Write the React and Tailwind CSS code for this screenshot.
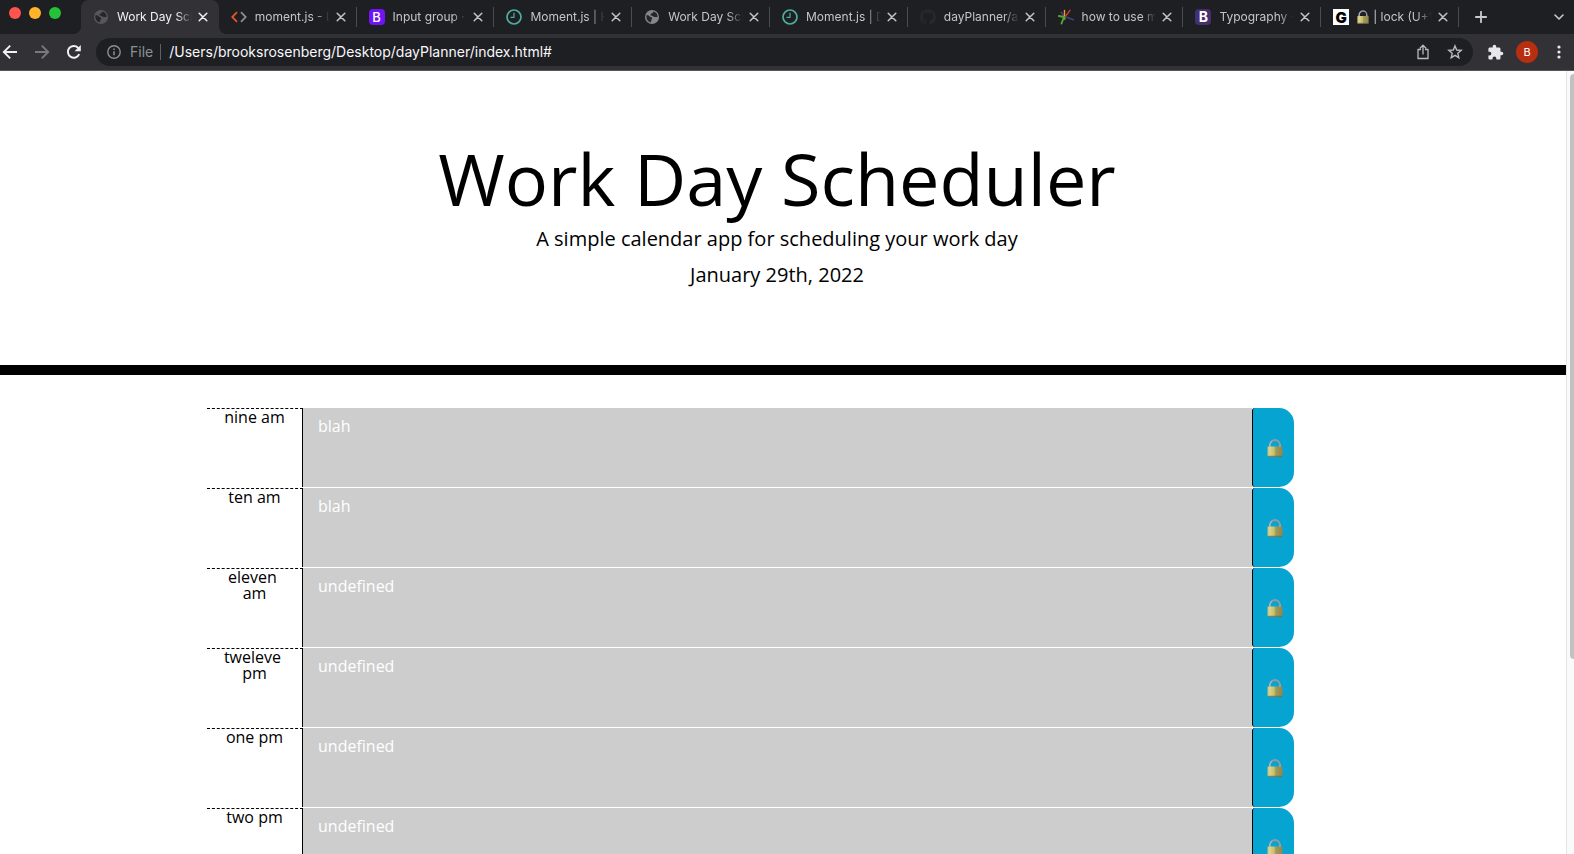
import React from 'react';

const svg = { fill: 'none', strokeLinecap: 'round', strokeLinejoin: 'round' };

function Globe({ color }) {
  return (
    <svg viewBox="0 0 16 16" className="size-4 shrink-0" aria-hidden="true">
      <circle cx="8" cy="8" r="7" fill={color} />
      <path
        d="M2.600 6c1.600.1 2.500.8 3.400 1.800.6.7 1.900.4 2.200 1.300.3.800-.8 1.200-.8 2 0 .900-.5 1.300-.5 2.300A5.600 5.600 0 0 1 2.600 6zM9.200 2.500c.2 1-.5 1.600-1.400 1.700-.8.1-.6 1-1.300 1.300-.4.300.1 1 .8 1 1.100 0 1.500.9 2.600 1.300.8.300 1.900.2 3.700.2A5.600 5.600 0 0 0 9.200 2.500z"
        fill="#25262a"
      />
    </svg>
  );
}

function Brackets() {
  return (
    <svg viewBox="0 0 16 16" className="size-4 shrink-0" fill="none" strokeWidth="1.800" aria-hidden="true">
      <path d="M6 3.200 1.300 8 6 12.800" stroke="#e5532d" />
      <path d="M10 3.200 14.700 8 10 12.800" stroke="#8c8c8c" />
    </svg>
  );
}

function LetterB({ deep }) {
  return (
    <span
      aria-hidden="true"
      className={
        deep
          ? 'flex size-4 shrink-0 items-center justify-center rounded-sm bg-[#472f6f] text-[14px] leading-none font-bold text-white'
          : 'flex size-4 shrink-0 items-center justify-center rounded-sm bg-[#7014f5] text-[13px] leading-none font-medium text-white'
      }
    >
      B
    </span>
  );
}

function Clock() {
  return (
    <svg viewBox="0 0 16 16" className="size-4 shrink-0" stroke="#4fada0" {...svg} aria-hidden="true">
      <circle cx="8" cy="8" r="7" strokeWidth="1.700" />
      <path d="M8 4v4.400H5" strokeWidth="1.200" />
    </svg>
  );
}

function Octocat() {
  return (
    <svg viewBox="0 0 16 16" className="size-4 shrink-0" fill="#26282c" aria-hidden="true">
      <path d="M8 0C3.58 0 0 3.58 0 8c0 3.54 2.29 6.53 5.47 7.59.4.07.55-.17.55-.38 0-.19-.01-.82-.01-1.49-2.01.37-2.53-.49-2.69-.94-.09-.23-.48-.94-.82-1.13-.28-.15-.68-.52-.01-.53.63-.01 1.08.58 1.23.82.72 1.21 1.87.87 2.33.66.07-.52.28-.87.51-1.07-1.78-.2-3.64-.89-3.64-3.95 0-.87.31-1.59.82-2.15-.08-.2-.36-1.02.08-2.12 0 0 .67-.21 2.2.82a7.6 7.6 0 0 1 4 0c1.53-1.04 2.2-.82 2.2-.82.44 1.1.16 1.92.08 2.12.51.56.82 1.27.82 2.15 0 3.07-1.87 3.75-3.65 3.95.29.25.54.73.54 1.48 0 1.07-.01 1.93-.01 2.2 0 .21.15.46.55.38A8.01 8.01 0 0 0 16 8c0-4.42-3.58-8-8-8z" />
    </svg>
  );
}

function Burst() {
  return (
    <svg viewBox="0 0 16 16" className="size-4 shrink-0" strokeWidth="1.400" {...svg} aria-hidden="true">
      <path d="M6.500 8 3.200 3.200" stroke="#4b3f86" />
      <path d="M6.500 8 6.500 1.500" stroke="#e0a02c" />
      <path d="M7 8 12 1.300" stroke="#d63a31" />
      <path d="M8 8l7.300 2.800" stroke="#473b80" strokeWidth="1.600" />
      <path d="M6 8 .8 7M6 8l-2.500 6.500M6 8l.8 2" stroke="#55a630" strokeWidth="1.900" />
    </svg>
  );
}

function LetterG() {
  return (
    <span aria-hidden="true" className="flex size-4 shrink-0 items-center justify-center bg-white text-[15px] leading-none font-black text-black">
      G
    </span>
  );
}

function Padlock({ small }) {
  return (
    <svg viewBox="0 0 16 18" className={small ? 'h-3.5 w-3 shrink-0' : 'h-[18px] w-4 shrink-0'} aria-hidden="true">
      <defs>
        <linearGradient id="brass" x1="0" x2="1" y1="0" y2="0">
          <stop offset="0" stopColor="#c9c072" />
          <stop offset=".15" stopColor="#dcd48b" />
          <stop offset=".45" stopColor="#c6bd6f" />
          <stop offset=".55" stopColor="#a39a58" />
          <stop offset="1" stopColor="#8f8650" />
        </linearGradient>
      </defs>
      <path d="M2.900 8.500V6.300a5.100 5.300 0 0 1 10.200 0v2.200" fill="none" stroke="#8f9aac" strokeWidth="1.800" />
      <path d="M2.700 8V6.300A5.300 5.500 0 0 1 5 1.800M12.900 8V6.300" fill="none" stroke="#c3cad6" strokeWidth=".8" />
      <rect x=".5" y="7.600" width="15" height="10.200" rx=".8" fill="url(#brass)" />
      <path d="M.8 17.300h14.400" stroke="#736c3c" strokeWidth=".9" />
    </svg>
  );
}

function Close() {
  return (
    <svg viewBox="0 0 10 10" className="size-2.5" stroke="currentColor" strokeWidth="1.500" {...svg} aria-hidden="true">
      <path d="m1.200 1.200 7.600 7.600M8.800 1.200 1.200 8.800" />
    </svg>
  );
}

const tabs = [
  { icon: <Globe color="#55575b" />, title: 'Work Day Scheduler', active: true },
  { icon: <Brackets />, title: 'moment.js - Libraries' },
  { icon: <LetterB />, title: 'Input group · Bootstrap' },
  { icon: <Clock />, title: 'Moment.js | Home' },
  { icon: <Globe color="#83878c" />, title: 'Work Day Scheduler' },
  { icon: <Clock />, title: 'Moment.js | Docs' },
  { icon: <Octocat />, title: 'dayPlanner/assets' },
  { icon: <Burst />, title: 'how to use moment' },
  { icon: <LetterB deep />, title: 'Typography · Bootstrap' },
  { icon: <LetterG />, title: '| lock (U+1F512)', lock: true },
];

function Tab({ icon, title, active, lock }) {
  return (
    <li
      className={
        active
          ? 'relative flex h-full min-w-0 items-center rounded-t-lg bg-[#323136] pr-[11px] pl-3 text-[#f1f1f3]'
          : 'flex h-full min-w-0 items-center text-[#c3c5ca]'
      }
    >
      {active && (
        <>
          <span className="absolute bottom-0 -left-2 size-2 bg-[radial-gradient(circle_at_0_0,transparent_8px,#323136_8px)]" />
          <span className="absolute -right-2 bottom-0 size-2 bg-[radial-gradient(circle_at_100%_0,transparent_8px,#323136_8px)]" />
        </>
      )}
      <div className={active ? 'flex min-w-0 flex-1 items-center' : 'flex h-5 min-w-0 flex-1 items-center border-r border-[#4b4c50] pr-2.5 pl-3'}>
        {icon}
        <a
          href="#"
          className="ml-2 flex min-w-0 flex-1 items-center gap-1 overflow-hidden text-xs whitespace-nowrap [mask-image:linear-gradient(to_right,black_80%,transparent)]"
        >
          {lock && <Padlock small />}
          {title}
        </a>
        <button type="button" aria-label={'Close ' + title} className="ml-1.5 shrink-0">
          <Close />
        </button>
      </div>
    </li>
  );
}

function Browser() {
  return (
    <header className="border-b border-[#57545c] bg-[#323136] font-[Inter,sans-serif]">
      <div className="flex h-[34px] items-center bg-[#1e1f23]">
        <div className="flex w-[81px] shrink-0 gap-2 pb-2 pl-[9px]">
          <button type="button" aria-label="Close window" className="size-3 rounded-full bg-[#ff544d]" />
          <button type="button" aria-label="Minimize window" className="size-3 rounded-full bg-[#ffb429]" />
          <button type="button" aria-label="Zoom window" className="size-3 rounded-full bg-[#25c138]" />
        </div>
        <ul className="grid h-full max-w-[1378px] min-w-0 flex-1 grid-cols-10 items-center">
          {tabs.map((t, i) => (
            <Tab key={i} {...t} />
          ))}
        </ul>
        <button type="button" aria-label="New tab" className="ml-4 shrink-0 text-[#c9cace]">
          <svg viewBox="0 0 12 12" className="size-3" stroke="currentColor" strokeWidth="1.800" {...svg} aria-hidden="true">
            <path d="M6 .8v10.400M.8 6h10.400" />
          </svg>
        </button>
        <button type="button" aria-label="Search tabs" className="mr-2.5 ml-auto shrink-0 text-[#c9cace]">
          <svg viewBox="0 0 10 10" className="size-2.5" stroke="currentColor" strokeWidth="1.600" {...svg} aria-hidden="true">
            <path d="M1 3l4 4 4-4" />
          </svg>
        </button>
      </div>

      <div className="flex h-9 items-center pr-2 pl-0.5">
        <div className="flex w-[94px] shrink-0 items-center gap-4">
          <button type="button" aria-label="Back" className="text-[#f1f1f3]">
            <svg viewBox="0 0 16 16" className="size-4" fill="none" stroke="currentColor" strokeWidth="1.900" aria-hidden="true">
              <path d="M15 8H2.200M8.200 1.600 1.800 8l6.400 6.400" />
            </svg>
          </button>
          <button type="button" aria-label="Forward" className="text-[#79797d]">
            <svg viewBox="0 0 16 16" className="size-4" fill="none" stroke="currentColor" strokeWidth="1.900" aria-hidden="true">
              <path d="M1 8h12.800M7.800 1.600 14.200 8l-6.400 6.400" />
            </svg>
          </button>
          <button type="button" aria-label="Reload" className="text-[#f1f1f3]">
            <svg viewBox="0 0 16 16" className="size-4" aria-hidden="true">
              <path d="M13.200 10.200A5.900 5.900 0 1 1 12 3.700l1.400 1.500" fill="none" stroke="currentColor" strokeWidth="2" />
              <path d="M14.800 1v6.200H8.600z" fill="currentColor" />
            </svg>
          </button>
        </div>
        <div className="flex h-7 min-w-0 flex-1 items-center rounded-full bg-[#1e1f23] pr-2.5 pl-[11px] text-sm">
          <svg viewBox="0 0 14 14" className="size-3.5 shrink-0" stroke="#8d8f93" aria-hidden="true">
            <circle cx="7" cy="7" r="6.200" fill="none" strokeWidth="1.400" />
            <path d="M7 6.200v4M7 3.400v1.500" strokeWidth="1.500" />
          </svg>
          <span className="ml-[9px] border-r border-[#5f6064] pr-[7px] leading-4 text-[#8d8f93]">File</span>
          <input
            aria-label="Address"
            defaultValue="/Users/brooksrosenberg/Desktop/dayPlanner/index.html#"
            className="ml-2 min-w-0 flex-1 bg-transparent text-[#f8f8fa] outline-none"
          />
          <button type="button" aria-label="Share" className="text-[#b9bbc0]">
            <svg viewBox="0 0 16 16" className="size-4" stroke="currentColor" strokeWidth="1.300" {...svg} aria-hidden="true">
              <path d="M5.500 5.500H3v9h10v-9h-2.500M8 10V1.500M5.200 4 8 1.200 10.800 4" />
            </svg>
          </button>
          <button type="button" aria-label="Bookmark" className="ml-4 text-[#b9bbc0]">
            <svg viewBox="0 0 16 16" className="size-4" fill="none" stroke="currentColor" strokeWidth="1.400" aria-hidden="true">
              <path d="m8 1.900 1.700 4.100 4.500.4-3.400 2.900 1 4.400L8 11.400l-3.800 2.300 1-4.400L1.800 6.400l4.500-.4z" />
            </svg>
          </button>
        </div>
        <button type="button" aria-label="Extensions" className="ml-3.5 text-[#e8e8ec]">
          <svg viewBox="0 0 24 24" className="size-[17px]" fill="currentColor" aria-hidden="true">
            <path d="M20.500 11H19V7c0-1.100-.900-2-2-2h-4V3.500a2.500 2.500 0 0 0-5 0V5H4c-1.100 0-2 .900-2 2v3.800h1.500a2.700 2.700 0 0 1 0 5.400H2V20c0 1.100.900 2 2 2h3.800v-1.500a2.700 2.700 0 0 1 5.400 0V22H17c1.100 0 2-.900 2-2v-4h1.500a2.500 2.500 0 0 0 0-5z" />
          </svg>
        </button>
        <button type="button" aria-label="Profile" className="ml-3 size-[22px] rounded-full bg-[#b72e11] text-[11px] text-white">
          B
        </button>
        <button type="button" aria-label="Menu" className="ml-3.5 text-[#e8e8ec]">
          <svg viewBox="0 0 14 14" className="size-3.5" fill="currentColor" aria-hidden="true">
            <circle cx="7" cy="2" r="1.600" />
            <circle cx="7" cy="7" r="1.600" />
            <circle cx="7" cy="12" r="1.600" />
          </svg>
        </button>
      </div>
    </header>
  );
}

const hours = [
  ['nine am', 'blah'],
  ['ten am', 'blah'],
  ['eleven am', 'undefined'],
  ['tweleve pm', 'undefined'],
  ['one pm', 'undefined'],
  ['two pm', 'undefined'],
];

function TimeBlock({ hour, note, id }) {
  return (
    <div className="flex h-20 shrink-0">
      <label
        htmlFor={id}
        className="mb-px w-24 shrink-0 border-t border-r border-dashed border-black px-4 text-center leading-4 whitespace-break-spaces [border-right-style:solid]"
      >
        {hour}
      </label>
      <textarea
        id={id}
        defaultValue={note}
        className="mb-px block min-w-0 flex-1 resize-none bg-[#cdcdcd] px-[15px] py-1.5 leading-6 text-white outline-none"
      />
      <button
        type="button"
        aria-label={'Save ' + hour}
        className="mb-px flex w-[42px] shrink-0 items-center justify-center rounded-l-[3px] rounded-r-[15px] border-l border-black bg-[#06a4d1] pl-[3px]"
      >
        <Padlock />
      </button>
    </div>
  );
}

export default function App() {
  return (
    <div className="flex h-screen flex-col overflow-hidden bg-white font-['Open_Sans',sans-serif] text-black">
      <Browser />
      <div className="flex min-h-0 flex-1">
        <main className="min-w-0 flex-1 overflow-hidden">
          <section className="border-b-[10px] border-black pt-16 pr-3 pb-[72px] text-center">
            <h1 className="text-7xl leading-[86px]">Work Day Scheduler</h1>
            <p className="text-xl leading-9">A simple calendar app for scheduling your work day</p>
            <p className="text-xl leading-9">January 29th, 2022</p>
          </section>
          <section className="flex flex-col pt-[33px] pr-[272px] pl-[207px]">
            {hours.map(([hour, note], i) => (
              <TimeBlock key={hour} id={'hour-' + i} hour={hour} note={note} />
            ))}
          </section>
        </main>
        <div className="w-2 shrink-0 border-l border-[#e6e6e6] bg-[#fafafa] pt-[3px] pl-[3px]" aria-hidden="true">
          <div className="h-3/4 rounded-l-sm bg-[#c1c1c1]" />
        </div>
      </div>
    </div>
  );
}
